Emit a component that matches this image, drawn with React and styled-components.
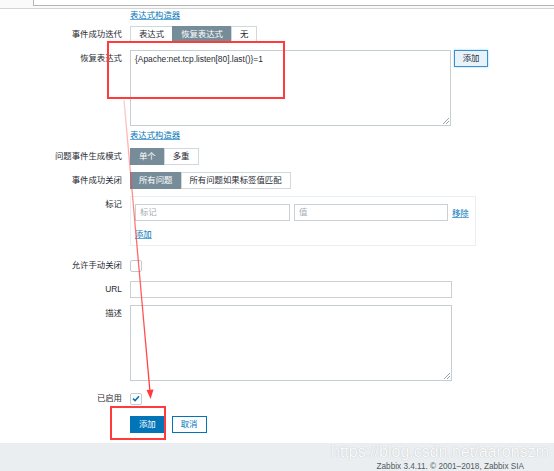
import React from "react";
import styled, { createGlobalStyle, css } from "styled-components";

const Global = createGlobalStyle`
  html, body {
    margin: 0;
    padding: 0;
    background: #fff;
  }
  body {
    font-family: "Liberation Sans", Arial, "Noto Sans CJK SC", sans-serif;
    font-size: 8.4px;
    color: #1f2c33;
  }
`;

const Page = styled.div`
  position: relative;
  width: 554px;
  height: 471px;
  overflow: hidden;
  display: flex;
  flex-direction: column;
`;

const TopBar = styled.div`
  height: 8px;
  display: flex;
  border-bottom: 1px solid #d4d4d4;
  background: #fafafa;
`;

const BarInput = styled.div`
  margin-left: 33px;
  flex: 1;
  height: 5px;
  background: #fff;
  border-left: 1px solid #b5b5b5;
  border-bottom: 1px solid #b5b5b5;
`;

const Form = styled.div`
  display: flex;
  flex-direction: column;
  padding-top: 1px;
`;

const Row = styled.div`
  display: grid;
  grid-template-columns: 122px 1fr;
  column-gap: 8px;
  align-items: start;
  margin-bottom: ${(p) => p.$mb ?? 7}px;
`;

const Label = styled.div`
  text-align: right;
  line-height: ${(p) => (p.$short ? "10px" : "17px")};
  white-space: nowrap;
`;

const Field = styled.div`
  display: flex;
  align-items: ${(p) => (p.$center ? "center" : "flex-start")};
  gap: 3px;
  min-height: ${(p) => (p.$center ? "17px" : "0")};
`;

const Link = styled.a`
  color: #0275b8;
  text-decoration: underline;
  text-decoration-color: #5ea7d6;
  line-height: 10px;
  white-space: nowrap;
  cursor: pointer;
`;

const Segments = styled.div`
  display: flex;
`;

const Segment = styled.div`
  height: 17px;
  line-height: 15px;
  padding: 0 8px;
  box-sizing: border-box;
  border: 1px solid #cfd8dc;
  margin-left: -1px;
  white-space: nowrap;
  &:first-child {
    margin-left: 0;
  }
  ${(p) =>
    p.$active
      ? css`
          background: #768d99;
          border-color: #768d99;
          color: #fff;
        `
      : css`
          background: #fff;
          color: #1f2c33;
        `}
`;

const TextArea = styled.div`
  width: ${(p) => p.$w || 321}px;
  height: 76px;
  box-sizing: border-box;
  border: 1px solid #c5ced3;
  padding: 3px 4px;
  line-height: 11px;
  position: relative;
  &::after {
    content: "";
    position: absolute;
    right: 1px;
    bottom: 1px;
    width: 6px;
    height: 6px;
    background: linear-gradient(
      135deg,
      transparent 45%,
      #9aa5ab 45%,
      #9aa5ab 52%,
      transparent 52%,
      transparent 70%,
      #9aa5ab 70%,
      #9aa5ab 77%,
      transparent 77%
    );
  }
`;

const GreyButton = styled.div`
  width: 34px;
  height: 17px;
  box-sizing: border-box;
  border: 1px solid #3d8fc9;
  background: #e8f2fb;
  box-shadow: 0 0 2px rgba(1, 164, 255, 0.45);
  text-align: center;
  line-height: 15px;
  color: #1f2c33;
`;

const Input = styled.div`
  width: ${(p) => p.$w}px;
  height: 17px;
  box-sizing: border-box;
  border: 1px solid #c9d1d6;
  padding: 0 4px;
  line-height: 15px;
  color: #a4aeb3;
`;

const TagBox = styled.div`
  width: 346px;
  box-sizing: border-box;
  border: 1px solid #ebeef0;
  padding: 7px 4px 6px 4px;
  display: flex;
  flex-direction: column;
  gap: 8px;
`;

const TagRow = styled.div`
  display: flex;
  align-items: center;
  gap: 4px;
`;

const Check = styled.div`
  width: 12px;
  height: 12px;
  box-sizing: border-box;
  border: 1px solid #c3cbd0;
  border-radius: 2px;
  background: #fff;
  display: flex;
  align-items: center;
  justify-content: center;
`;

const Buttons = styled.div`
  display: flex;
  gap: 7px;
`;

const Button = styled.div`
  height: 17px;
  padding: 0 8px;
  box-sizing: border-box;
  border: 1px solid #0275b8;
  line-height: 15px;
  ${(p) =>
    p.$primary
      ? css`
          background: #0275b8;
          color: #fff;
        `
      : css`
          background: #fff;
          color: #0275b8;
        `}
`;

const Footer = styled.div`
  margin-top: 10px;
  flex: 1;
  background: #ebeef0;
  display: flex;
  justify-content: flex-end;
  align-items: flex-end;
  padding-right: 30px;
  font-size: 8.2px;
  color: #4f5b61;
  line-height: 9px;
`;

const Watermark = styled.div`
  position: absolute;
  left: 331px;
  top: 443px;
  font-size: 16px;
  line-height: 18px;
  color: rgba(255, 255, 255, 0.95);
  text-shadow: 0 0 1px rgba(120, 130, 140, 0.55);
  white-space: nowrap;
`;

const RedBox = styled.div`
  position: absolute;
  box-sizing: border-box;
  border: 2px solid #ff3b3b;
  pointer-events: none;
  left: ${(p) => p.$x}px;
  top: ${(p) => p.$y}px;
  width: ${(p) => p.$w}px;
  height: ${(p) => p.$h}px;
`;

const Arrow = styled.svg`
  position: absolute;
  left: 0;
  top: 0;
  pointer-events: none;
`;

const CheckMark = () => (
  <svg width="8" height="7" viewBox="0 0 8 7">
    <path d="M1 3.6 L3.1 5.6 L7 1.2" fill="none" stroke="#0275b8" strokeWidth="1.5" />
  </svg>
);

export default function App() {
  return (
    <>
      <Global />
      <Page>
        <TopBar>
          <BarInput />
        </TopBar>
        <Form>
          <Row $mb={6}>
            <Label $short />
            <Field>
              <Link>表达式构造器</Link>
            </Field>
          </Row>
          <Row>
            <Label>事件成功迭代</Label>
            <Segments>
              <Segment>表达式</Segment>
              <Segment $active>恢复表达式</Segment>
              <Segment>无</Segment>
            </Segments>
          </Row>
          <Row $mb={4}>
            <Label>恢复表达式</Label>
            <Field>
              <TextArea>{"{Apache:net.tcp.listen[80].last()}=1"}</TextArea>
              <GreyButton>添加</GreyButton>
            </Field>
          </Row>
          <Row $mb={8}>
            <Label $short />
            <Field>
              <Link>表达式构造器</Link>
            </Field>
          </Row>
          <Row>
            <Label>问题事件生成模式</Label>
            <Segments>
              <Segment $active>单个</Segment>
              <Segment>多重</Segment>
            </Segments>
          </Row>
          <Row>
            <Label>事件成功关闭</Label>
            <Segments>
              <Segment $active>所有问题</Segment>
              <Segment>所有问题如果标签值匹配</Segment>
            </Segments>
          </Row>
          <Row $mb={11}>
            <Label>标记</Label>
            <TagBox>
              <TagRow>
                <Input $w={155}>标记</Input>
                <Input $w={154}>值</Input>
                <Link>移除</Link>
              </TagRow>
              <div>
                <Link>添加</Link>
              </div>
            </TagBox>
          </Row>
          <Row>
            <Label>允许手动关闭</Label>
            <Field $center>
              <Check />
            </Field>
          </Row>
          <Row>
            <Label>URL</Label>
            <Input $w={322} />
          </Row>
          <Row $mb={9}>
            <Label>描述</Label>
            <TextArea $w={322} />
          </Row>
          <Row $mb={9}>
            <Label>已启用</Label>
            <Field $center>
              <Check>
                <CheckMark />
              </Check>
            </Field>
          </Row>
          <Row $mb={0}>
            <div />
            <Buttons>
              <Button $primary>添加</Button>
              <Button>取消</Button>
            </Buttons>
          </Row>
        </Form>
        <Footer>Zabbix 3.4.11. © 2001–2018, Zabbix SIA</Footer>
        <Watermark>https://blog.csdn.net/aaronszm</Watermark>
        <RedBox $x={107} $y={41} $w={178} $h={58} />
        <RedBox $x={110} $y={406} $w={56} $h={34} />
        <Arrow width="554" height="471" viewBox="0 0 554 471">
          <defs>
            <linearGradient id="fade" x1="0" y1="0" x2="0" y2="1">
              <stop offset="0" stopColor="#ff3b3b" stopOpacity="0.25" />
              <stop offset="0.5" stopColor="#ff3b3b" stopOpacity="0.75" />
              <stop offset="1" stopColor="#ff3b3b" stopOpacity="1" />
            </linearGradient>
          </defs>
          <line x1="124" y1="100" x2="150" y2="392" stroke="url(#fade)" strokeWidth="1.3" />
          <polygon points="146.5,390 153.5,389.5 150.6,399" fill="#ff3b3b" />
        </Arrow>
      </Page>
    </>
  );
}
